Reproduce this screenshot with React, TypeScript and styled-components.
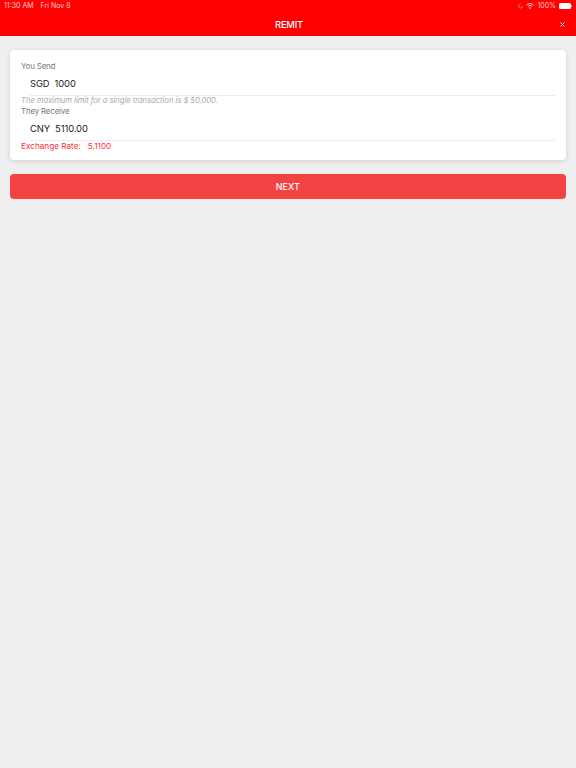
import React from "react";
import styled, { createGlobalStyle } from "styled-components";

const Global = createGlobalStyle`
  html, body { margin: 0; padding: 0; background: #efefef; }
  body { font-family: Inter, "Liberation Sans", sans-serif; -webkit-font-smoothing: antialiased; }
  #root { min-height: 768px; }
`;

const Header = styled.header`
  background: #ff0000;
  height: 36px;
  box-sizing: border-box;
  display: flex;
  flex-direction: column;
`;

const StatusBar = styled.div`
  height: 12px;
  padding: 0 4px;
  display: flex;
  align-items: center;
  justify-content: space-between;
  color: #ffd0d0;
  font-size: 7px;
  line-height: 12px;
`;

const StatusGroup = styled.div<{ $gap: number }>`
  display: flex;
  align-items: center;
  gap: ${(p) => p.$gap}px;
`;

const TitleBar = styled.div`
  flex: 1;
  display: flex;
  align-items: center;
  justify-content: space-between;
  padding: 0 10px 0 11px;
`;

const Title = styled.h1`
  margin: 0;
  flex: 1;
  text-align: center;
  color: #fff;
  font-size: 9.4px;
  font-weight: 500;
  letter-spacing: -0.2px;
  padding-left: 9px;
`;

const Close = styled.span`
  width: 8px;
  display: flex;
  justify-content: center;
`;

const Page = styled.main`
  padding: 14px 10px 0;
`;

const Card = styled.section`
  background: #fff;
  border-radius: 4px;
  height: 110px;
  box-sizing: border-box;
  padding: 11px 11px 0;
  box-shadow: 0 1px 4px rgba(0, 0, 0, 0.14);
`;

const Label = styled.div`
  color: #777;
  font-size: 7.9px;
  letter-spacing: -0.16px;
  line-height: 10px;
`;

const Field = styled.div<{ $height: number }>`
  margin-left: 9px;
  height: ${(p) => p.$height}px;
  border-bottom: 1px solid #ececec;
  display: flex;
  align-items: center;
  gap: 5px;
  color: #222;
  font-size: 9.4px;
  letter-spacing: -0.08px;
`;

const Hint = styled.div`
  color: #aaa;
  font-style: italic;
  font-size: 7.7px;
  letter-spacing: -0.06px;
  line-height: 10px;
`;

const Rate = styled.div`
  color: #f7323a;
  font-size: 8.2px;
  line-height: 11px;
  display: flex;
  gap: 7px;
`;

const NextButton = styled.button`
  display: block;
  width: 555.5px;
  height: 25px;
  margin: 14px 0 0;
  border: 0;
  border-radius: 4px;
  background: #f24242;
  color: #fff;
  font: 500 9px Inter, "Liberation Sans", sans-serif;
`;

export default function App() {
  return (
    <>
      <Global />
      <Header>
        <StatusBar>
          <StatusGroup $gap={7}>
            <span>11:30 AM</span>
            <span>Fri Nov 8</span>
          </StatusGroup>
          <StatusGroup $gap={3}>
            <svg width="5" height="6" viewBox="0 0 5 6" aria-hidden="true">
              <path d="M2.5 1 A2 2 0 1 0 4.5 3" fill="none" stroke="#ff8080" strokeWidth="0.9" />
            </svg>
            <svg width="8" height="6" viewBox="0 0 8 6" aria-hidden="true">
              <path d="M0.4 2.1 A5 5 0 0 1 7.6 2.1" fill="none" stroke="#ffe5e5" strokeWidth="0.9" />
              <path d="M1.8 3.4 A3 3 0 0 1 6.2 3.4" fill="none" stroke="#ffe5e5" strokeWidth="0.9" />
              <path d="M4 6 L2.9 4.7 A1.6 1.6 0 0 1 5.1 4.7 Z" fill="#ffe5e5" />
            </svg>
            <span>100%</span>
            <svg width="13" height="6" viewBox="0 0 13 6" aria-hidden="true">
              <rect x="0" y="0" width="12" height="6" rx="1.5" fill="#fff" />
              <rect x="12.2" y="2" width="0.8" height="2" fill="#ffc9c9" />
            </svg>
          </StatusGroup>
        </StatusBar>
        <TitleBar>
          <Title>REMIT</Title>
          <Close>
            <svg width="5" height="5" viewBox="0 0 5 5" aria-hidden="true">
              <path d="M0.5 0.5 L4.5 4.5 M4.5 0.5 L0.5 4.5" stroke="#fff" strokeWidth="1" />
            </svg>
          </Close>
        </TitleBar>
      </Header>
      <Page>
        <Card>
          <Label>You Send</Label>
          <Field $height={24}>
            <span>SGD</span>
            <span>1000</span>
          </Field>
          <Hint>The maximum limit for a single transaction is $ 50,000.</Hint>
          <Label>They Receive</Label>
          <Field $height={24}>
            <span>CNY</span>
            <span>5110.00</span>
          </Field>
          <Rate>
            <span>Exchange Rate:</span>
            <span>5.1100</span>
          </Rate>
        </Card>
        <NextButton>NEXT</NextButton>
      </Page>
    </>
  );
}
